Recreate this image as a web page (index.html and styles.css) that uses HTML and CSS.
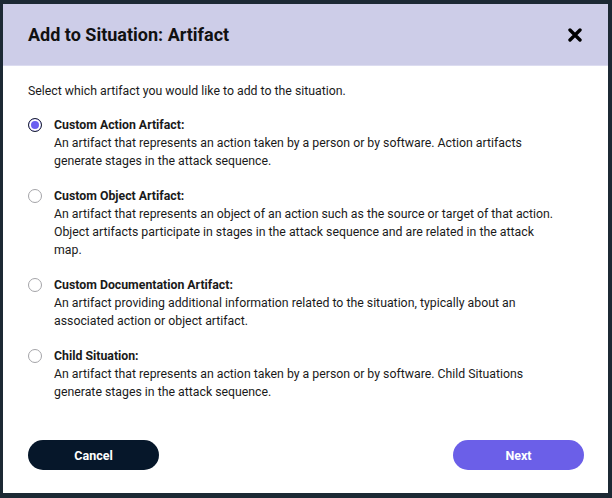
FILE: index.html
```html
<!DOCTYPE html>
<html lang="en">
<head>
    <meta charset="UTF-8">
    <title>Add to Situation: Artifact</title>
    <link rel="stylesheet" href="styles.css">
</head>
<body>
    <div class="dialog">
        <div class="dialog_head">
            <h1 class="dialog_title">Add to Situation: Artifact</h1>
            <span class="dialog_close">
                <svg width="14" height="14" viewBox="0 0 14 14">
                    <path d="M2 2 L12 12 M12 2 L2 12" stroke="#000" stroke-width="3.4" stroke-linecap="round"/>
                </svg>
            </span>
        </div>
        <div class="dialog_body">
            <p class="intro">Select which artifact you would like to add to the situation.</p>
            <ul class="options">
                <li class="option checked">
                    <span class="radio"></span>
                    <div class="option_text">
                        <strong>Custom Action Artifact:</strong>
                        <p>An artifact that represents an action taken by a person or by software. Action artifacts generate stages in the attack sequence.</p>
                    </div>
                </li>
                <li class="option">
                    <span class="radio"></span>
                    <div class="option_text">
                        <strong>Custom Object Artifact:</strong>
                        <p>An artifact that represents an object of an action such as the source or target of that action. Object artifacts participate in stages in the attack sequence and are related in the attack map.</p>
                    </div>
                </li>
                <li class="option">
                    <span class="radio"></span>
                    <div class="option_text">
                        <strong>Custom Documentation Artifact:</strong>
                        <p>An artifact providing additional information related to the situation, typically about an associated action or object artifact.</p>
                    </div>
                </li>
                <li class="option">
                    <span class="radio"></span>
                    <div class="option_text">
                        <strong>Child Situation:</strong>
                        <p>An artifact that represents an action taken by a person or by software. Child Situations generate stages in the attack sequence.</p>
                    </div>
                </li>
            </ul>
        </div>
        <div class="dialog_foot">
            <button class="btn btn_cancel">Cancel</button>
            <button class="btn btn_next">Next</button>
        </div>
    </div>
</body>
</html>
```

FILE: styles.css
```css
* {
    margin: 0;
    padding: 0;
    list-style: none;
    border: 0;
    box-sizing: border-box;
}
html, body {
    height: 100%;
    width: 100%;
}
body {
    background-color: #1c2934;
    font-family: Roboto, "Liberation Sans", sans-serif;
    color: #1a1a1a;
    padding: 4px 0 0 3px;
}
.dialog {
    width: 605px;
    height: 489px;
    background-color: #fff;
    display: flex;
    flex-direction: column;
}
.dialog_head {
    height: 62px;
    background-color: #cdcde8;
    border-bottom: 1px solid #dcdcf0;
    display: flex;
    align-items: center;
    justify-content: space-between;
    padding: 0 25px 0 25px;
}
.dialog_title {
    font-size: 18px;
    font-weight: 700;
    color: #111;
}
.dialog_close {
    display: flex;
    margin-right: 1px;
}
.dialog_body {
    flex: 1;
    padding: 16px 25px 0 25px;
    font-size: 12.3px;
    line-height: 18px;
}
.intro {
    margin-bottom: 16px;
}
.option {
    display: flex;
    gap: 12px;
    margin-bottom: 17px;
}
.radio {
    flex: none;
    width: 14px;
    height: 14px;
    margin-top: 2px;
    border-radius: 50%;
    border: 1px solid #a4a4a8;
    background-color: #fff;
}
.option.checked .radio {
    border: 1.5px solid #1a2030;
    background-color: #6a5ff0;
    box-shadow: inset 0 0 0 2px #fff;
}
.option_text {
    max-width: 503px;
}
.option_text strong {
    display: block;
    font-weight: 700;
}
.dialog_foot {
    display: flex;
    justify-content: space-between;
    padding: 0 24px 23px 25px;
}
.btn {
    width: 131px;
    height: 30px;
    border-radius: 15px;
    font-family: Roboto, "Liberation Sans", sans-serif;
    font-size: 12.5px;
    font-weight: 700;
    color: #fff;
    cursor: pointer;
}
.btn_cancel {
    background-color: #06172a;
}
.btn_next {
    background-color: #6b5fe8;
}
```
